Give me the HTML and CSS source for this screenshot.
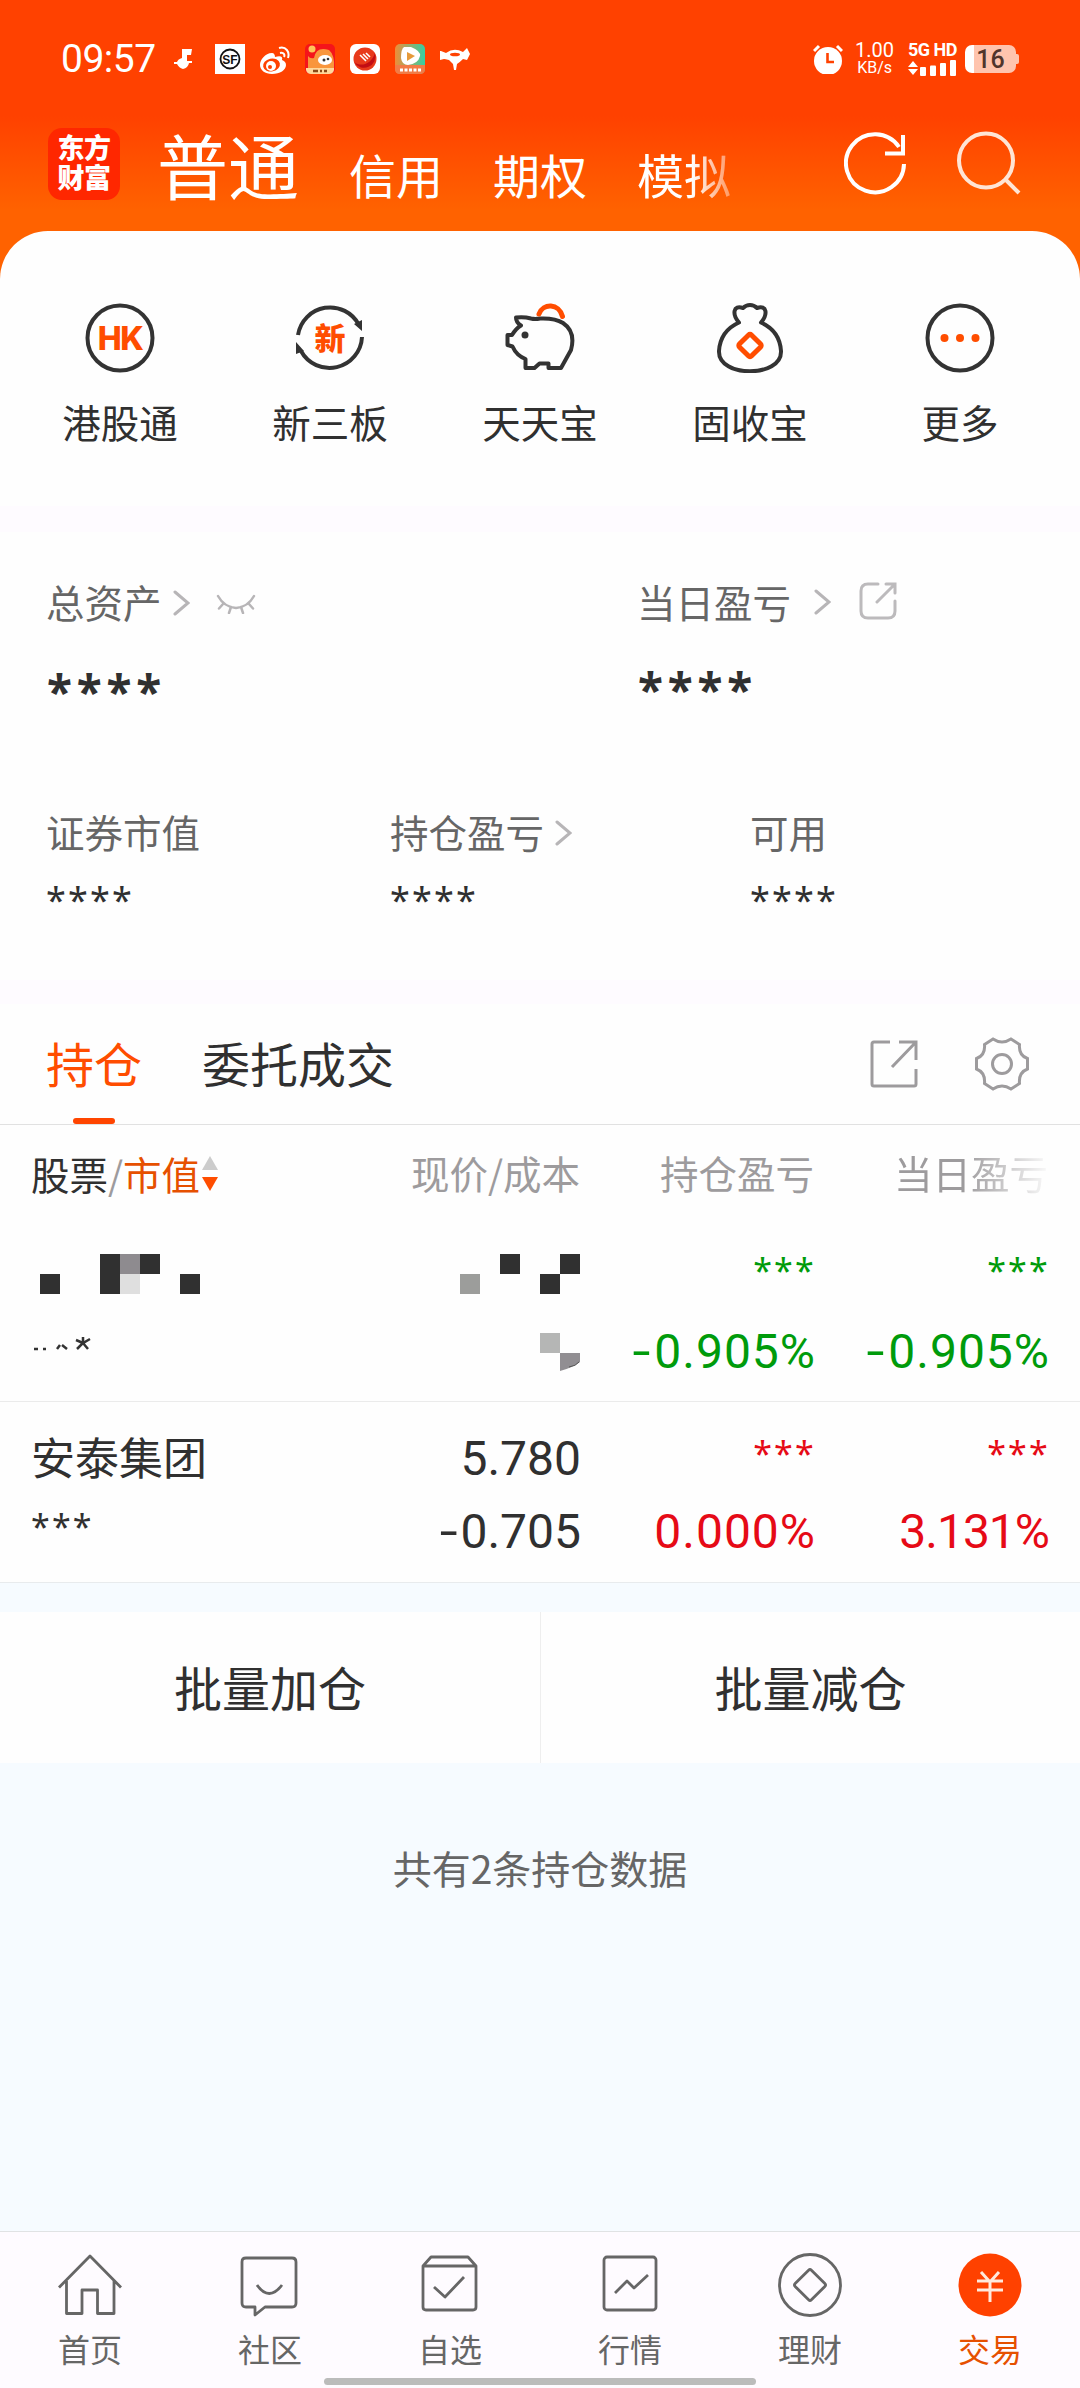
FILE: index.html
```html
<!DOCTYPE html>
<html lang="zh-CN">
<head>
<meta charset="utf-8">
<title>交易</title>
<link rel="stylesheet" href="styles.css">
</head>
<body>
<div class="app">
  <header class="top">
    <div class="status">
      <span class="clock">09:57</span>
      <div class="notices">
        <svg width="30" height="30" viewBox="0 0 30 30"><path d="M12 5h10l-1 6h-4v6h5v2h-3q-1 5-6 6-4-1-6-5H4v-2h3q1-3 5-4z" fill="#fff"/></svg>
        <svg width="30" height="30" viewBox="0 0 30 30"><path d="M0 0h30v30H0z" fill="#fff"/><circle cx="15" cy="15" r="9.500" fill="none" stroke="#111" stroke-width="1.800"/><text x="15" y="19.500" text-anchor="middle" class="sf">SF</text></svg>
        <svg width="30" height="30" viewBox="0 0 30 30" fill="none"><path d="M12 9C5 9 0 16 0 21c0 5 5 9 12 9 8 0 14-4 14-9 0-3-2-4-4-5 1-3-1-5-7-3 0-2-1-4-3-4z" fill="#fff"/><ellipse cx="11.500" cy="21" rx="8.500" ry="6.500" fill="#ff4100" transform="rotate(-12 11.500 21)"/><circle cx="11" cy="22" r="5" fill="#fff"/><circle cx="10" cy="23" r="2" fill="#ff4100"/><path d="M19 4c7-2 11 4 9 10M20 9c4-1 5 2 4 4" stroke="#fff" stroke-width="2"/></svg>
        <svg width="30" height="30" viewBox="0 0 30 30"><rect width="30" height="30" rx="5" fill="#f5141a"/><path d="M3 24V12q2 3 6 2 2-12 15-8 6 5 5 18z" fill="#f9963c"/><circle cx="7" cy="5" r="3.500" fill="#ffc45a"/><ellipse cx="20" cy="16" rx="7" ry="5" fill="#fff"/><circle cx="19" cy="16" r="1.500" fill="#333"/><circle cx="23" cy="15" r="1.300" fill="#333"/><path d="M1 24h28v2q-1 4-5 4H6q-4 0-5-4z" fill="#ffd99c"/><path d="M8 27h5m2 0h2m2 0h3" stroke="#8a4a18" stroke-width="2.500"/></svg>
        <svg width="30" height="30" viewBox="0 0 30 30"><rect width="30" height="30" rx="6" fill="#fff"/><circle cx="15" cy="15" r="11.500" fill="#e8391b"/><path d="M25 9a11.500 11.500 0 0 1-21 9c8 6 18 1 21-9z" fill="#c20d14"/><path d="M10 11l6 6m-3-7l5 5m-2-6l4 4" stroke="#fff" stroke-width="1.600"/></svg>
        <svg width="30" height="30" viewBox="0 0 30 30"><defs><linearGradient id="video"><stop stop-color="#ef8d38"/><stop offset="1" stop-color="#35cfa4"/></linearGradient></defs><rect width="30" height="30" rx="5" fill="url(#video)"/><path d="M0 21h30v4q0 5-5 5H5q-5 0-5-5z" fill="#f17b47"/><path d="M9 3h7q10 4 9 9-2 8-12 9-6 0-7-7 0-9 3-11z" fill="#fff"/><path d="M12 8l8 4-8 5z" fill="#e69a3a"/><path d="M5 26h21" stroke="#fff" stroke-width="3" stroke-dasharray="3 1.500"/></svg>
        <svg width="30" height="30" viewBox="0 0 30 30"><path d="M1 7l5 2q8-6 17-1l4-4 3 6-3 6-4-1q-3 3-6 5l-1 6h-2l-1-6-4-4q-4-1-5-1l-4 1q-2-6 0-9z" fill="#fff"/><ellipse cx="15" cy="10.500" rx="5" ry="1.800" fill="#ff4100"/></svg>
      </div>
      <div class="system">
        <svg width="30" height="30" viewBox="0 0 30 30"><circle cx="15" cy="17" r="14" fill="#fff"/><path d="M1 7l5-5m18 0l5 5" stroke="#fff" stroke-width="3"/><path d="M14.500 9v9H21" fill="none" stroke="#ff4100" stroke-width="2.600"/></svg>
        <div class="speed"><span>1.00</span><small>KB/s</small></div>
        <div class="network"><b>5G HD</b>
          <svg width="48" height="16" viewBox="0 0 48 16" fill="#fff"><path d="M0 7l5-6 5 6zM0 9l5 6 5-6z"/><rect x="12" y="7" width="6" height="9" rx="1"/><rect x="22" y="5.500" width="6" height="10.500" rx="1"/><rect x="32" y="3" width="6" height="13" rx="1"/><rect x="42" y="0" width="6" height="16" rx="1"/></svg>
        </div>
        <div class="battery">16</div>
      </div>
    </div>
    <div class="accounts">
      <div class="logo">东方<br>财富</div>
      <nav class="account-tabs"><span class="current">普通</span><span>信用</span><span>期权</span><span class="faded">模拟</span></nav>
      <div class="actions">
        <svg width="64" height="64" viewBox="0 0 64 64" fill="none" stroke="#fff" stroke-width="4"><path d="M60 33A29 29 0 1 1 55 16"/><path d="M59 4v18.500H41"/></svg>
        <svg width="64" height="64" viewBox="0 0 64 64" fill="none" stroke="#ffe5d5" stroke-width="4"><circle cx="29" cy="29.500" r="27"/><path d="M48 48l14 14"/></svg>
      </div>
    </div>
  </header>

  <section class="shortcuts">
    <div class="shortcut"><svg width="70" height="70" viewBox="0 0 70 70"><circle class="ink" cx="35" cy="35" r="32.500"/><text x="35" y="47" text-anchor="middle" class="hk">HK</text></svg><span>港股通</span></div>
    <div class="shortcut"><svg width="70" height="70" viewBox="0 0 70 70"><path class="ink" d="M3 32A32.500 32.500 0 0 1 64 22M67 34A32.500 32.500 0 0 1 6 48"/><path d="M59 21l8-4 0 11zM1 51l0-12 8 9z" fill="#333"/><text x="35" y="46.500" text-anchor="middle" class="new">新</text></svg><span>新三板</span></div>
    <div class="shortcut"><svg width="70" height="70" viewBox="0 0 70 70"><path class="ink" d="M35 15.500q-5 1-9 0-7-2-15-1 0 5 5 8-5 3-9 9.500H2.500V42l5 1.500q4 9 13 12.500v9h9l5-4.500h9V65h12.500l10-18c3-11 1-21-8-27-6-4-14-5-24-4.500z"/><circle cx="20" cy="32" r="3.500" fill="#333"/><path class="accent" d="M34 11c4-11 20-11 23.500 2.500"/></svg><span>天天宝</span></div>
    <div class="shortcut"><svg width="70" height="70" viewBox="0 0 70 70"><path class="ink" d="M24 19.500c-7-8-6-18 4-14.500 4-4 10-4 14 0 10-3.500 11 6.500 4 14.500C56 24 65 32 66 48c1 27-63 27-62 0 1-16 10-24 20-28.500z"/><rect class="accent" x="26.500" y="34" width="17" height="17" rx="2" transform="rotate(45 35 42.500)"/></svg><span>固收宝</span></div>
    <div class="shortcut"><svg width="70" height="70" viewBox="0 0 70 70"><circle class="ink" cx="35" cy="35" r="32.500"/><g fill="#ff4d00"><circle cx="19.500" cy="35" r="4"/><circle cx="35" cy="35" r="4"/><circle cx="50.500" cy="35" r="4"/></g></svg><span>更多</span></div>
  </section>

  <section class="assets">
    <div class="totals">
      <div class="asset"><div class="label">总资产<svg class="chev near" width="17" height="26" viewBox="0 0 17 26"><path d="M2 2l13 11L2 24"/></svg><svg class="eye" width="40" height="20" viewBox="0 0 40 20"><path d="M2 2q6 11 18 12Q32 13 38 2M7 10l-4 4.500M15 13l-2 6M25 13l2 6M33 10l4 4.500"/></svg></div><div class="stars big">****</div></div>
      <div class="asset raised"><div class="label">当日盈亏<svg class="chev wide" width="17" height="26" viewBox="0 0 17 26"><path d="M2 2l13 11L2 24"/></svg><svg class="export" width="38" height="38" viewBox="0 0 38 38"><path d="M19 2H9q-7 0-7 7v20q0 7 7 7h20q7 0 7-7V19M27 2h9v9M36 2L18 20"/></svg></div><div class="stars big">****</div></div>
    </div>
    <div class="details">
      <div><div class="label">证券市值</div><div class="stars">****</div></div>
      <div><div class="label">持仓盈亏<svg class="chev near" width="17" height="26" viewBox="0 0 17 26"><path d="M2 2l13 11L2 24"/></svg></div><div class="stars">****</div></div>
      <div><div class="label">可用</div><div class="stars">****</div></div>
    </div>
  </section>

  <section class="holdings">
    <div class="tabs">
      <span class="tab active">持仓</span><span class="tab">委托成交</span>
      <div class="tools">
        <svg width="48" height="48" viewBox="0 0 48 48"><path d="M20 2H4q-2 0-2 2v40q0 2 2 2h40q2 0 2-2V29M29 2h17v18M46 2L22 27"/></svg>
        <svg width="54" height="54" viewBox="0 0 54 54"><path d="M18 2q9 6 18 0l8.500 5.500q-1 11 8 14V32q-9 3.500-8 14.500L36 52q-9-6-18 0l-8.500-5.500q1-11-8-14.500V21.500q9-3 8-14z"/><circle cx="27" cy="27" r="9.500"/></svg>
      </div>
    </div>
    <div class="row heads">
      <div class="sorter"><span class="dark">股票</span>/<span class="orange">市值</span><svg width="16" height="35" viewBox="0 0 16 35"><path d="M8 0l8 14H0z" fill="#ccc"/><path d="M8 35l8-14H0z" fill="#ff4d00"/></svg></div>
      <div>现价/成本</div><div>持仓盈亏</div><div class="fade-out">当日盈亏</div>
    </div>
    <div class="row stock">
      <div class="cell"><div class="line"><svg width="180" height="40" viewBox="0 0 180 40"><path d="M9 20h20v20H9zM69 0h20v40H69zM109 0h20v20h-20zM149 20h20v20h-20z" fill="#303030"/><path d="M89 0h20v20H89z" fill="#8e8b8f"/><path d="M89 20h20v20H89z" fill="#dfdfdf"/></svg></div><div class="line low"><svg class="scraps" width="62" height="14" viewBox="0 0 62 14" fill="none" stroke="#333" stroke-width="2.500"><path d="M3 12h4M12 12h3M26 12l3-4M31 8l5 4M45 3l7 3 7-4M52 0v6l-6 6M52 6l5 6"/></svg></div></div>
      <div class="cell right"><div class="line"><svg width="120" height="40" viewBox="0 0 120 40"><path d="M40 0h20v20H40zM80 20h20v20H80zM100 0h20v20h-20z" fill="#303030"/><path d="M0 20h20v20H0z" fill="#9c9d9b"/></svg></div><div class="line low"><svg width="40" height="38" viewBox="0 0 40 38"><path d="M0 0h20v20H0z" fill="#b5b6b5"/><path d="M20 20h20v9q-8 6-20 9z" fill="#918e92"/><path d="M29 34q7-1 10-5" stroke="#555" fill="none"/></svg></div></div>
      <div class="cell right green"><div class="line stars">***</div><div class="line num pct"><span class="sign">-</span>0.905%</div></div>
      <div class="cell right green"><div class="line stars">***</div><div class="line num pct"><span class="sign">-</span>0.905%</div></div>
    </div>
    <div class="row stock second">
      <div class="cell"><div class="line name">安泰集团</div><div class="line stars">***</div></div>
      <div class="cell right"><div class="line num">5.780</div><div class="line num"><span class="sign">-</span>0.705</div></div>
      <div class="cell right red"><div class="line stars">***</div><div class="line num pct">0.000%</div></div>
      <div class="cell right red"><div class="line stars">***</div><div class="line num tight">3.131%</div></div>
    </div>
  </section>

  <section class="batch"><div>批量加仓</div><div>批量减仓</div></section>
  <p class="note">共有2条持仓数据</p>

  <nav class="bottom">
    <div class="dest"><svg width="66" height="66" viewBox="0 0 66 66"><path d="M2 35.500L33 4l31 31.500M9.500 29v32.500h15.500V38h15.500v23.500H57V29"/></svg><span>首页</span></div>
    <div class="dest"><svg width="66" height="66" viewBox="0 0 66 66"><path d="M9 6h46q4 0 4 4v41q0 4-4 4H28l-10 8v-8H9q-4 0-4-4V10q0-4 4-4z" /><path d="M20 33q12 17 25 0"/></svg><span>社区</span></div>
    <div class="dest"><svg width="66" height="66" viewBox="0 0 66 66"><path d="M6 14l8-9h37l8 9v41q0 3-3 3H9q-3 0-3-3zh53M17 35l11 10 19-20"/></svg><span>自选</span></div>
    <div class="dest"><svg width="66" height="66" viewBox="0 0 66 66"><rect x="7" y="5" width="52" height="53" rx="3"/><path d="M18 41l12-12 7 7 14-13"/></svg><span>行情</span></div>
    <div class="dest"><svg width="66" height="66" viewBox="0 0 66 66"><circle cx="33" cy="33" r="30.500"/><rect x="21.500" y="21.500" width="23" height="23" rx="2" transform="rotate(45 33 33)"/></svg><span>理财</span></div>
    <div class="dest trade"><svg width="66" height="66" viewBox="0 0 66 66"><circle cx="33" cy="33" r="31.500"/><path d="M24 20l9 10 9-10M33 30v20M20 29h26M20 38h26"/></svg><span>交易</span></div>
    <div class="gesture"></div>
  </nav>
</div>
</body>
</html>
```
FILE: styles.css
```css
* { box-sizing: border-box; }
body { margin: 0; background: #ff6200; font-family: "Noto Sans CJK SC", sans-serif; color: #303030; }
svg { display: block; flex: none; }
.app { width: 1080px; height: 2388px; display: flex; flex-direction: column; background: #f6fbff; overflow: hidden; }

.top { height: 279px; flex: none; background: linear-gradient(#ff4100 0, #ff4100 116px, #ff6200 210px); color: #fff; }
.status { height: 118px; padding: 0 60px 0 61px; display: flex; align-items: center; }
.clock { font: 39px/40px Roboto, sans-serif; width: 100px; letter-spacing: -.5px; }
.notices { display: flex; gap: 15px; margin-left: 9px; }
.sf { font: bold 12px "Liberation Sans", sans-serif; fill: #111; }
.system { display: flex; align-items: center; margin-left: auto; }
.speed { font: 20px/15px Roboto, sans-serif; width: 37px; margin: 0 16px 0 12px; text-align: right; display: flex; flex-direction: column; gap: 3px; }
.speed small { font-size: 16px; line-height: 14px; }
.network { width: 48px; margin-right: 9px; }
.network b { display: block; font: bold 18px/16px Roboto, sans-serif; white-space: nowrap; margin-bottom: 2px; letter-spacing: -.5px; }
.battery { width: 51px; height: 28px; margin-right: 4px; border-radius: 7px; background: linear-gradient(90deg, #fff 9px, #ffc4ae 9px); color: #51352b; font: 500 25px/29px Roboto, sans-serif; text-align: center; position: relative; }
.battery::after { content: ""; position: absolute; left: 100%; top: 9px; width: 3px; height: 10px; border-radius: 0 2px 2px 0; background: #ffc4ae; }
.accounts { height: 90px; padding: 0 59px 0 48px; display: flex; align-items: center; }
.logo { width: 72px; height: 72px; margin-top: 1px; border-radius: 14px; background: #ff2700; font-size: 27px; line-height: 30px; font-weight: 900; text-align: center; padding-top: 4px; letter-spacing: -.5px; }
.account-tabs { display: flex; align-items: baseline; align-self: flex-start; margin-left: 37px; font-size: 47px; line-height: 90px; gap: 50px; white-space: nowrap; }
.account-tabs span { width: 94px; }
.account-tabs .current { font-size: 71px; width: 142px; }
.account-tabs .faded { -webkit-mask-image: linear-gradient(90deg, #000 58%, transparent 125%); mask-image: linear-gradient(90deg, #000 58%, transparent 125%); }
.actions { display: flex; gap: 49px; margin-left: auto; }

.shortcuts { height: 275px; margin-top: -48px; padding: 72px 15px 0; flex: none; background: #fefefe; border-radius: 48px 48px 0 0; display: grid; grid-template-columns: repeat(5, 1fr); }
.shortcut { display: flex; flex-direction: column; align-items: center; font-size: 38.5px; line-height: 40px; }
.shortcut span { margin-top: 28px; }
.ink { fill: none; stroke: #333; stroke-width: 4; stroke-linejoin: round; }
.accent { fill: none; stroke: #ff4d00; stroke-width: 5; stroke-linecap: round; stroke-linejoin: round; }
.hk { font: 800 32px Inter, sans-serif; fill: #ff4d00; letter-spacing: -1.5px; }
.new { font: 900 31px "Noto Sans CJK SC", sans-serif; fill: #ff4d00; }

.assets { height: 474px; flex: none; border-top: 26px solid #fefbff; background: #fefefe; padding: 49px 46px 0; color: #666; }
.label { display: flex; align-items: center; height: 40px; line-height: 40px; font-size: 38.5px; }
.totals { display: flex; height: 230px; }
.asset { width: 591px; flex: none; }
.chev { fill: none; stroke: #b7b5b7; stroke-width: 3; stroke-linecap: round; margin-top: 4px; }
.near { margin-left: 11px; }
.wide { margin: 1px 0 0 23px; }
.eye { fill: none; stroke: #b7b5b7; stroke-width: 2.5; stroke-linecap: round; margin: 6px 0 0 26px; }
.export { fill: none; stroke: #bcbabc; stroke-width: 3; stroke-linecap: round; margin-left: 28px; }
.stars { font-family: "Noto Sans", sans-serif; font-size: 36px; letter-spacing: 2.2px; line-height: 40px; color: #303030; height: 40px; }
.details .stars { margin-top: 29px; }
.stars.big { font-size: 46px; letter-spacing: 4.8px; font-weight: 700; margin-top: 50px; padding-left: 1px; }
.raised .big { margin-top: 48px; }
.details { display: grid; grid-template-columns: 344px 360px 1fr; }

.holdings { height: 603px; flex: none; border-top: 24px solid #fefbff; background: #fefefe; border-bottom: 1px solid #e8ebed; }
.tabs { height: 121px; padding: 0 51px 0 46px; display: flex; align-items: center; border-bottom: 1px solid #e1e1e1; font-size: 48px; }
.tab { height: 120px; line-height: 117px; margin-right: 60px; }
.tab.active { color: #ff4d00; display: flex; flex-direction: column; align-items: center; }
.tab.active::after { content: ""; width: 42px; height: 6px; margin-top: -3px; border-radius: 3px; background: #ff4500; }
.tools { display: flex; align-items: center; gap: 57px; margin-left: auto; }
.tools svg { fill: none; stroke: #9d9b9d; stroke-width: 3; }
.row { display: grid; grid-template-columns: 299px 250px 234px 234px; padding: 0 31px; }
.heads { height: 96px; color: #9d9b9d; font-size: 38.5px; text-align: right; }
.heads > div { padding-top: 1px; height: 96px; line-height: 93px; }
.sorter { display: flex; align-items: center; }
.sorter svg { margin-left: 2px; }
.dark { color: #303030; }
.orange { color: #e65000; }
.fade-out { -webkit-mask-image: linear-gradient(90deg, #000 64%, transparent 102%); mask-image: linear-gradient(90deg, #000 64%, transparent 102%); }
.stock { height: 181px; border-bottom: 1px solid #ebebeb; padding-top: 33px; }
.cell { display: grid; grid-template-rows: 79px 40px; }
.cell.right { justify-items: end; }
.line { height: 40px; line-height: 40px; }
.low .scraps { margin-top: 4px; }
.row .stars { font-size: 34px; color: inherit; margin-top: -4px; }
.cell.right .stars { margin-right: -2px; }
.stock .num { font: 48px/40px Roboto, sans-serif; margin: -1px -1px 0 0; }
.stock .pct { letter-spacing: 1px; margin-right: -2px; }
.stock .tight { letter-spacing: -1px; }
.sign { display: inline-block; transform: scaleX(1.35); margin-right: 5px; }
.second .cell { grid-template-rows: 73px 40px; }
.second { padding-top: 37px; border: 0; height: 180px; }
.second .line.num { margin-top: 0; }
.second .stars { margin-top: -6px; }
.name { font-size: 44px; margin-top: -3px; }
.green { color: #009b0b; }
.red { color: #e60a16; }

.batch { height: 151px; flex: none; margin-top: 29px; background: #fefefe; display: grid; grid-template-columns: 1fr 1fr; font-size: 48px; line-height: 148px; text-align: center; }
.batch div + div { border-left: 1px solid #eee; }
.note { margin: 84px 0 0; font-size: 39px; line-height: 40px; color: #666; text-align: center; }

.bottom { height: 157px; margin-top: auto; flex: none; background: #fefbff; border-top: 1px solid #e0e3e4; display: grid; grid-template-columns: repeat(6, 180px); grid-template-rows: 146px 8px; color: #666; font-size: 32px; line-height: 36px; }
.dest { display: flex; flex-direction: column; align-items: center; padding-top: 20px; }
.dest svg { fill: none; stroke: #666; stroke-width: 2.8; stroke-linejoin: round; }
.dest span { margin-top: 12px; }
.trade { color: #e65000; }
.trade circle { fill: #ff4100; stroke: none; }
.trade path { stroke: #ffe9dc; stroke-width: 3; }
.gesture { grid-column: 1 / -1; width: 432px; height: 7px; justify-self: center; border-radius: 4px; background: #bbbcbb; }
```
